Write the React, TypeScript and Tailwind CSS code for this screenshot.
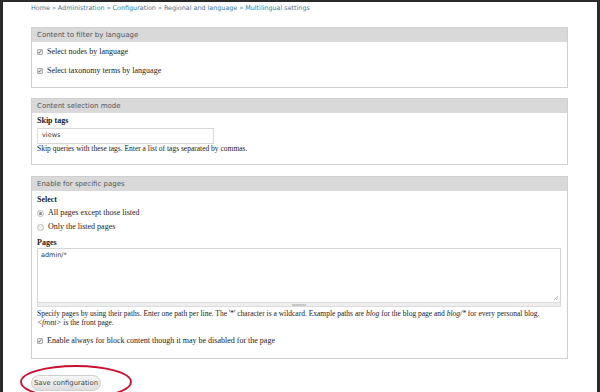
import React from "react"

const serif = { fontFamily: '"Liberation Serif", "DejaVu Serif", serif' }
const sans = { fontFamily: '"DejaVu Sans", "Liberation Sans", sans-serif' }

function Check() {
  return (
    <span className="inline-flex items-center justify-center w-[6px] h-[6px] border border-[#aaa] bg-[#eee] rounded-[1px] text-[6px] leading-none text-[#444]" style={sans}>
      ✓
    </span>
  )
}

function Radio({ on }: { on?: boolean }) {
  return (
    <span className="inline-flex items-center justify-center w-[7px] h-[7px] rounded-full border border-[#bbb] bg-[#f3f3f3]">
      {on && <span className="w-[3px] h-[3px] rounded-full bg-[#888]" />}
    </span>
  )
}

function Fieldset({ title, children, className }: { title: string; children: React.ReactNode; className?: string }) {
  return (
    <div className={"border border-[#cfcfcf] bg-white " + (className ?? "")}>
      <div className="h-[14px] bg-[#d9d9d9] pl-[5px] flex items-center text-[7px] text-[#555]" style={sans}>
        {title}
      </div>
      <div className="px-[5px]">{children}</div>
    </div>
  )
}

export default function App() {
  return (
    <div className="relative w-[600px] h-[392px] overflow-hidden bg-white border-l-[3px] border-t-[2px] border-r-[3px] border-[#2a2a2a]">
      <div className="pl-[28px] pr-[29px]">
        <div className="h-[13px] flex items-center text-[6.4px] text-[#3a7a9c]" style={sans}>
          Home » Administration » Configuration » Regional and language » Multilingual settings
        </div>

        <div className="h-[12px]" />

        <Fieldset title="Content to filter by language" className="h-[61px]">
          <div className="text-[8px] text-[#1a1a1a]" style={serif}>
            <div className="flex items-center gap-[4px] h-[10px] mt-[5px]">
              <Check />
              <span>Select nodes by language</span>
            </div>
            <div className="flex items-center gap-[4px] h-[10px] mt-[9px]">
              <Check />
              <span>Select taxonomy terms by language</span>
            </div>
          </div>
        </Fieldset>

        <div className="h-[10px]" />

        <Fieldset title="Content selection mode" className="h-[67px]">
          <div className="text-[#1a1a1a]" style={serif}>
            <div className="h-[10px] mt-[3px] flex items-center text-[8px] font-bold">Skip tags</div>
            <div className="mt-[2px] w-[177px] h-[16px] border border-[#d8d8d8] flex items-center pl-[4px] text-[6.5px] text-[#333]" style={sans}>
              views
            </div>
            <div className="h-[10px] flex items-center text-[7.5px]">
              Skip queries with these tags. Enter a list of tags separated by commas.
            </div>
          </div>
        </Fieldset>

        <div className="h-[11px]" />

        <Fieldset title="Enable for specific pages" className="h-[183px]">
          <div className="text-[#1a1a1a]" style={serif}>
            <div className="h-[10px] mt-[4px] flex items-center text-[8px] font-bold">Select</div>
            <div className="flex items-center gap-[4px] h-[10px] mt-[3px] text-[8px]">
              <Radio on />
              <span>All pages except those listed</span>
            </div>
            <div className="flex items-center gap-[4px] h-[10px] mt-[4px] text-[8px]">
              <Radio />
              <span>Only the listed pages</span>
            </div>
            <div className="h-[10px] mt-[6px] flex items-center text-[8px] font-bold">Pages</div>
            <div className="mr-[1px]">
              <div className="relative h-[54px] border border-[#d4d4d4] border-b-0 pl-[3px] pt-[2px] text-[6.5px] text-[#333]" style={sans}>
                admin/*
                <svg className="absolute right-[1px] bottom-[1px]" width="6" height="6" viewBox="0 0 6 6">
                  <path d="M5 1 L1 5 M5 3 L3 5" stroke="#999" strokeWidth="0.7" />
                </svg>
              </div>
              <div className="h-[5px] bg-[#eeeeee] border border-[#dcdcdc] flex items-center justify-center">
                <span className="w-[14px] h-[2px] bg-[#c8c8c8]" />
              </div>
            </div>
            <div className="mt-[2px] text-[7.5px] leading-[9px] whitespace-nowrap">
              <div>
                Specify pages by using their paths. Enter one path per line. The '*' character is a wildcard. Example paths are <em>blog</em> for the blog page and <em>blog/*</em> for every personal blog.
              </div>
              <div>
                <em>&lt;front&gt;</em> is the front page.
              </div>
            </div>
            <div className="flex items-center gap-[4px] h-[10px] mt-[9px] text-[8px]">
              <Check />
              <span>Enable always for block content though it may be disabled for the page</span>
            </div>
          </div>
        </Fieldset>

        <div className="h-[16px]" />

        <div className="flex">
          <div className="w-[70px] h-[16px] rounded-[8px] bg-gradient-to-b from-[#f6f6f6] to-[#dedede] border border-[#cfcfcf] flex items-center justify-center text-[6.8px] text-[#444]" style={sans}>
            Save configuration
          </div>
        </div>
      </div>

      <svg className="absolute left-[15px] top-[357px]" width="120" height="40" viewBox="0 0 120 40">
        <ellipse cx="58" cy="23" rx="55" ry="16" fill="none" stroke="#c8102e" strokeWidth="1.8" />
      </svg>
    </div>
  )
}
